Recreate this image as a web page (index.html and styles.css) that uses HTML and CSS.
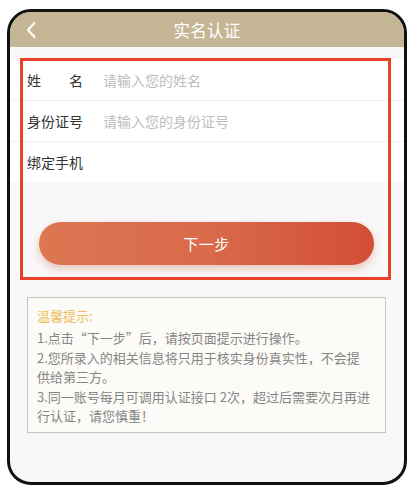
FILE: index.html
```html
<!DOCTYPE html>
<html lang="zh-CN">
<head>
<meta charset="utf-8">
<link rel="stylesheet" href="styles.css">
</head>
<body>
<div class="phone">
  <header class="topbar">
    <svg class="back" width="12" height="18" viewBox="0 0 12 18"><path d="M9.5 2 L3 9 L9.5 16" fill="none" stroke="#fff" stroke-width="2" stroke-linecap="round" stroke-linejoin="round"/></svg>
    <h1 class="title">实名认证</h1>
  </header>
  <div class="form">
    <div class="row"><span class="label">姓名</span><span class="ph">请输入您的姓名</span></div>
    <div class="row"><span class="label">身份证号</span><span class="ph">请输入您的身份证号</span></div>
    <div class="row"><span class="label">绑定手机</span></div>
  </div>
  <div class="action">
    <button class="btn">下一步</button>
  </div>
  <div class="tips">
    <p class="tips-title">温馨提示:</p>
    <p class="tips-text">1.点击“下一步”后，请按页面提示进行操作。<br>2.您所录入的相关信息将只用于核实身份真实性，不会提<br>供给第三方。<br>3.同一账号每月可调用认证接口 2次，超过后需要次月再进<br>行认证，请您慎重！</p>
  </div>
  <div class="highlight"></div>
</div>
</body>
</html>
```
FILE: styles.css
```css
* { box-sizing: border-box; }
html, body { margin: 0; padding: 0; background: #fff; }
body {
  font-family: "Noto Sans CJK SC", "Noto Sans", sans-serif;
  padding: 9px 8px 0 7px;
}
.phone {
  position: relative;
  width: 400px;
  height: 476px;
  border: 3px solid #111;
  border-radius: 24px;
  overflow: hidden;
  background: #f8f8f8;
}
.topbar {
  position: relative;
  height: 35px;
  background: #c4b694;
  display: flex;
  align-items: center;
  justify-content: center;
}
.back {
  position: absolute;
  left: 15px;
  top: 9px;
}
.title {
  margin: 0;
  font-size: 16.5px;
  font-weight: 400;
  color: #fff;
  letter-spacing: 0.3px;
}
.form {
  margin-top: 12px;
  background: #fff;
}
.row {
  height: 41px;
  display: flex;
  align-items: center;
  padding-left: 17px;
  font-size: 14px;
  border-top: 1px solid #f0f0f0;
}
.row:first-child { border-top: none; }
.label {
  width: 56px;
  color: #333;
  text-align: justify;
  text-align-last: justify;
  margin-right: 20px;
}
.ph { color: #bdbdbd; }
.action {
  padding: 40px 30px 0 29px;
}
.btn {
  display: block;
  width: 100%;
  height: 43px;
  border: none;
  border-radius: 22px;
  background: linear-gradient(90deg, #dc7752 0%, #d96a4a 50%, #d24e36 100%);
  box-shadow: 0 4px 8px rgba(200, 80, 50, 0.3);
  color: #fff;
  font-family: inherit;
  font-size: 15px;
  letter-spacing: 0.5px;
}
.tips {
  margin: 32px 18px 0 17px;
  border: 1.5px solid #c4c4c4;
  background: #fcfbf7;
  padding: 7px 6px 6px 9px;
}
.tips p { margin: 0; }
.tips-title {
  font-size: 13px;
  line-height: 22px;
  color: #ebbd5a;
  margin-bottom: 1px !important;
}
.tips-text {
  font-size: 13px;
  line-height: 19.5px;
  color: #868686;
  white-space: nowrap;
}
.highlight {
  position: absolute;
  left: 10px;
  top: 46px;
  width: 371px;
  height: 222px;
  border: 3px solid #ea4129;
  pointer-events: none;
}
```
